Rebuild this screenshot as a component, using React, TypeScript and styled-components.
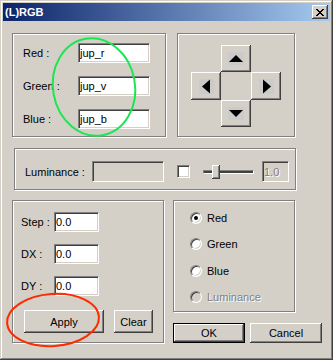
import React from 'react';
import styled, { createGlobalStyle } from 'styled-components';

const FACE = '#d4d0c8';

const Global = createGlobalStyle`
  html, body { margin: 0; padding: 0; background: ${FACE}; }
  body { font-family: "Liberation Sans", Arial, sans-serif; font-size: 11px; color: #000; }
  * { box-sizing: border-box; }
`;

const Window = styled.div`
  position: relative;
  width: 333px;
  height: 360px;
  padding: 3px;
  background: ${FACE};
  box-shadow: inset -1px -1px #404040, inset 1px 1px ${FACE}, inset -2px -2px #808080, inset 2px 2px #ffffff;
  display: flex;
  flex-direction: column;
`;

const TitleBar = styled.div`
  height: 18px;
  flex: none;
  display: flex;
  align-items: center;
  justify-content: space-between;
  padding: 0 2px;
  background: linear-gradient(to right, #0a246a, #a6caf0);
  color: #fff;
  font-weight: bold;
  font-size: 11px;
`;

const CloseButton = styled.div`
  width: 16px;
  height: 14px;
  display: flex;
  align-items: center;
  justify-content: center;
  background: ${FACE};
  box-shadow: inset -1px -1px #404040, inset 1px 1px #fff, inset -2px -2px #808080;
`;

const Content = styled.div`
  display: flex;
  flex-direction: column;
  padding: 12px 0 0 9px;
`;

const Row = styled.div<{ $gap: number; $top?: number; $left?: number }>`
  display: flex;
  align-items: flex-start;
  gap: ${p => p.$gap}px;
  margin-top: ${p => p.$top ?? 0}px;
  margin-left: ${p => p.$left ?? 0}px;
`;

const Etched = styled.div<{ $w: number; $h: number }>`
  width: ${p => p.$w}px;
  height: ${p => p.$h}px;
  flex: none;
  border: 1px solid #808080;
  box-shadow: inset 1px 1px #fff, 1px 1px #fff;
`;

const ColorGroup = styled(Etched)`
  display: grid;
  grid-template-columns: 55px 72px;
  grid-auto-rows: 20px;
  row-gap: 13px;
  align-items: center;
  align-content: start;
  padding: 9px 0 0 10px;
`;

const ArrowGroup = styled(Etched)`
  display: grid;
  grid-template-columns: repeat(3, 30px);
  grid-template-rows: 27px 28px 27px;
  align-content: start;
  padding: 11px 0 0 13px;
`;

const LumGroup = styled(Etched)`
  display: flex;
  align-items: center;
  padding: 5px 0 0 10px;
`;

const StepGroup = styled(Etched)`
  display: flex;
  flex-direction: column;
  padding: 11px 0 0 8px;
`;

const FieldGrid = styled.div`
  display: grid;
  grid-template-columns: 33px 45px;
  grid-auto-rows: 20px;
  row-gap: 12px;
  align-items: center;
`;

const RadioGroup = styled(Etched)`
  display: grid;
  grid-auto-rows: 13px;
  row-gap: 13.5px;
  align-content: start;
  padding: 10px 0 0 16px;
`;

const Label = styled.span<{ $w?: number }>`
  white-space: nowrap;
  ${p => (p.$w ? `width: ${p.$w}px; flex: none;` : '')}
`;

const TextField = styled.input<{ $w: number; $h?: number; $disabled?: boolean; $ml?: number }>`
  width: ${p => p.$w}px;
  height: ${p => p.$h ?? 20}px;
  margin: 0 0 0 ${p => p.$ml ?? 0}px;
  padding: 0 0 0 1px;
  font: 11px "Liberation Sans", Arial, sans-serif;
  color: ${p => (p.$disabled ? '#808080' : '#000')};
  text-shadow: ${p => (p.$disabled ? '1px 1px #fff' : 'none')};
  background: ${p => (p.$disabled ? FACE : '#fff')};
  border-style: solid;
  border-width: 1px;
  border-color: #808080 #fff #fff #808080;
  box-shadow: inset 1px 1px #404040, inset -1px -1px ${FACE};
  outline: none;
  flex: none;
`;

const CheckBox = styled.div`
  width: 13px;
  height: 13px;
  margin-left: 13px;
  flex: none;
  background: #fff;
  border: 1px solid;
  border-color: #808080 #fff #fff #808080;
  box-shadow: inset 1px 1px #404040, inset -1px -1px ${FACE};
`;

const Slider = styled.div`
  position: relative;
  width: 51px;
  height: 16px;
  margin-left: 13px;
  flex: none;
  display: flex;
  align-items: center;
`;

const Track = styled.div`
  width: 100%;
  height: 4px;
  border-top: 1px solid #808080;
  border-left: 1px solid #808080;
  border-bottom: 1px solid #fff;
  border-right: 1px solid #fff;
  background: #404040;
`;

const Thumb = styled.div`
  position: absolute;
  left: 9px;
  top: 1px;
  width: 8px;
  height: 14px;
  background: ${FACE};
  box-shadow: inset -1px -1px #404040, inset 1px 1px #fff, inset -2px -2px #808080;
`;

const RaisedButton = styled.button<{ $w: number; $h: number; $default?: boolean }>`
  width: ${p => p.$w}px;
  height: ${p => p.$h}px;
  margin: 0;
  padding: 0;
  border: none;
  flex: none;
  background: ${FACE};
  font: 11px "Liberation Sans", Arial, sans-serif;
  color: #000;
  box-shadow: ${p =>
    p.$default
      ? 'inset 0 0 0 1px #000, inset -2px -2px #404040, inset 2px 2px #fff, inset -3px -3px #808080'
      : 'inset -1px -1px #404040, inset 1px 1px #fff, inset -2px -2px #808080'};
`;

const ArrowButton = styled(RaisedButton)<{ $col: number; $row: number }>`
  grid-column: ${p => p.$col};
  grid-row: ${p => p.$row};
  width: 30px;
  height: 100%;
  display: flex;
  align-items: center;
  justify-content: center;
`;

const ArrowFace = styled.div<{ $w: number; $h: number }>`
  width: ${p => p.$w}px;
  height: ${p => p.$h}px;
  background: #cbcbcb;
  display: flex;
  align-items: center;
  justify-content: center;
`;

const ButtonsRow = styled.div`
  display: flex;
  gap: 10px;
  margin: 14px 0 0 3px;
`;

const RightColumn = styled.div`
  display: flex;
  flex-direction: column;
`;

const DialogButtons = styled.div`
  display: flex;
  gap: 5px;
  margin-top: 11px;
`;

const RadioRow = styled.div<{ $disabled?: boolean }>`
  display: flex;
  align-items: center;
  gap: 5px;
  color: ${p => (p.$disabled ? '#808080' : '#000')};
  text-shadow: ${p => (p.$disabled ? '1px 1px #fff' : 'none')};
`;

const RadioCircle = styled.div<{ $checked?: boolean; $disabled?: boolean }>`
  width: 12px;
  height: 12px;
  flex: none;
  border-radius: 50%;
  border: 1px solid;
  border-color: #808080 #fff #fff #808080;
  box-shadow: inset 1px 1px #404040, inset -1px -1px ${FACE};
  background: ${p => (p.$disabled ? FACE : '#fff')};
  display: flex;
  align-items: center;
  justify-content: center;
  &::after {
    content: '';
    display: ${p => (p.$checked ? 'block' : 'none')};
    width: 4px;
    height: 4px;
    border-radius: 50%;
    background: #000;
  }
`;

const Overlay = styled.svg`
  position: absolute;
  left: 0;
  top: 0;
  pointer-events: none;
`;

const CloseGlyph = () => {
  const rows = ['XX....XX', '.XX..XX.', '..XXXX..', '...XX...', '..XXXX..', '.XX..XX.', 'XX....XX'];
  return (
    <svg width={8} height={7} viewBox="0 0 8 7" shapeRendering="crispEdges">
      {rows.flatMap((r, y) =>
        r.split('').map((c, x) => (c === 'X' ? <rect key={`${x}-${y}`} x={x} y={y} width={1} height={1} fill="#000" /> : null))
      )}
    </svg>
  );
};

type Dir = 'up' | 'down' | 'left' | 'right';

const Arrow = ({ dir }: { dir: Dir }) => {
  const horiz = dir === 'left' || dir === 'right';
  const w = horiz ? 15 : 16;
  const h = horiz ? 15 : 13;
  const pts: Record<Dir, string> = {
    up: '1,10 15,10 8,3',
    down: '1,3 15,3 8,10',
    left: '3,7.5 11,0.5 11,14.5',
    right: '12,7.5 4,0.5 4,14.5',
  };
  return (
    <ArrowFace $w={w} $h={h}>
      <svg width={w} height={h} viewBox={`0 0 ${w} ${h}`}>
        <polygon points={pts[dir]} fill="#000" />
      </svg>
    </ArrowFace>
  );
};

export default function App() {
  return (
    <>
      <Global />
      <Window>
        <TitleBar>
          <span>(L)RGB</span>
          <CloseButton>
            <CloseGlyph />
          </CloseButton>
        </TitleBar>
        <Content>
          <Row $gap={11}>
            <ColorGroup $w={154} $h={104}>
              <Label>Red :</Label>
              <TextField $w={72} readOnly value="jup_r" />
              <Label>Green :</Label>
              <TextField $w={72} readOnly value="jup_v" />
              <Label>Blue :</Label>
              <TextField $w={72} readOnly value="jup_b" />
            </ColorGroup>
            <ArrowGroup $w={118} $h={104}>
              <ArrowButton $w={30} $h={27} $col={2} $row={1}><Arrow dir="up" /></ArrowButton>
              <ArrowButton $w={30} $h={28} $col={1} $row={2}><Arrow dir="left" /></ArrowButton>
              <ArrowButton $w={30} $h={28} $col={3} $row={2}><Arrow dir="right" /></ArrowButton>
              <ArrowButton $w={30} $h={27} $col={2} $row={3}><Arrow dir="down" /></ArrowButton>
            </ArrowGroup>
          </Row>
          <Row $gap={0} $top={11} $left={2}>
            <LumGroup $w={282} $h={42}>
              <Label $w={67}>Luminance :</Label>
              <TextField $w={72} $h={21} $disabled readOnly value="" />
              <CheckBox />
              <Slider>
                <Track />
                <Thumb />
              </Slider>
              <TextField $w={27} $h={21} $disabled $ml={8} readOnly value="1.0" />
            </LumGroup>
          </Row>
          <Row $gap={9} $top={10}>
            <StepGroup $w={152} $h={143}>
              <FieldGrid>
                <Label>Step :</Label>
                <TextField $w={45} readOnly value="0.0" />
                <Label>DX :</Label>
                <TextField $w={45} readOnly value="0.0" />
                <Label>DY :</Label>
                <TextField $w={45} readOnly value="0.0" />
              </FieldGrid>
              <ButtonsRow>
                <RaisedButton $w={80} $h={23}>Apply</RaisedButton>
                <RaisedButton $w={39} $h={23}>Clear</RaisedButton>
              </ButtonsRow>
            </StepGroup>
            <RightColumn>
              <RadioGroup $w={122} $h={112}>
                <RadioRow><RadioCircle $checked /><span>Red</span></RadioRow>
                <RadioRow><RadioCircle /><span>Green</span></RadioRow>
                <RadioRow><RadioCircle /><span>Blue</span></RadioRow>
                <RadioRow $disabled><RadioCircle $disabled /><span>Luminance</span></RadioRow>
              </RadioGroup>
              <DialogButtons>
                <RaisedButton $w={72} $h={20} $default>OK</RaisedButton>
                <RaisedButton $w={72} $h={20}>Cancel</RaisedButton>
              </DialogButtons>
            </RightColumn>
          </Row>
        </Content>
        <Overlay width={333} height={360} viewBox="0 0 333 360">
          <ellipse cx={94} cy={87} rx={41} ry={49} transform="rotate(-10 94 87)" fill="none" stroke="#19e650" strokeWidth={2} />
          <ellipse cx={53} cy={320} rx={46} ry={26} transform="rotate(-4 53 320)" fill="none" stroke="#ff2a00" strokeWidth={2} />
        </Overlay>
      </Window>
    </>
  );
}
